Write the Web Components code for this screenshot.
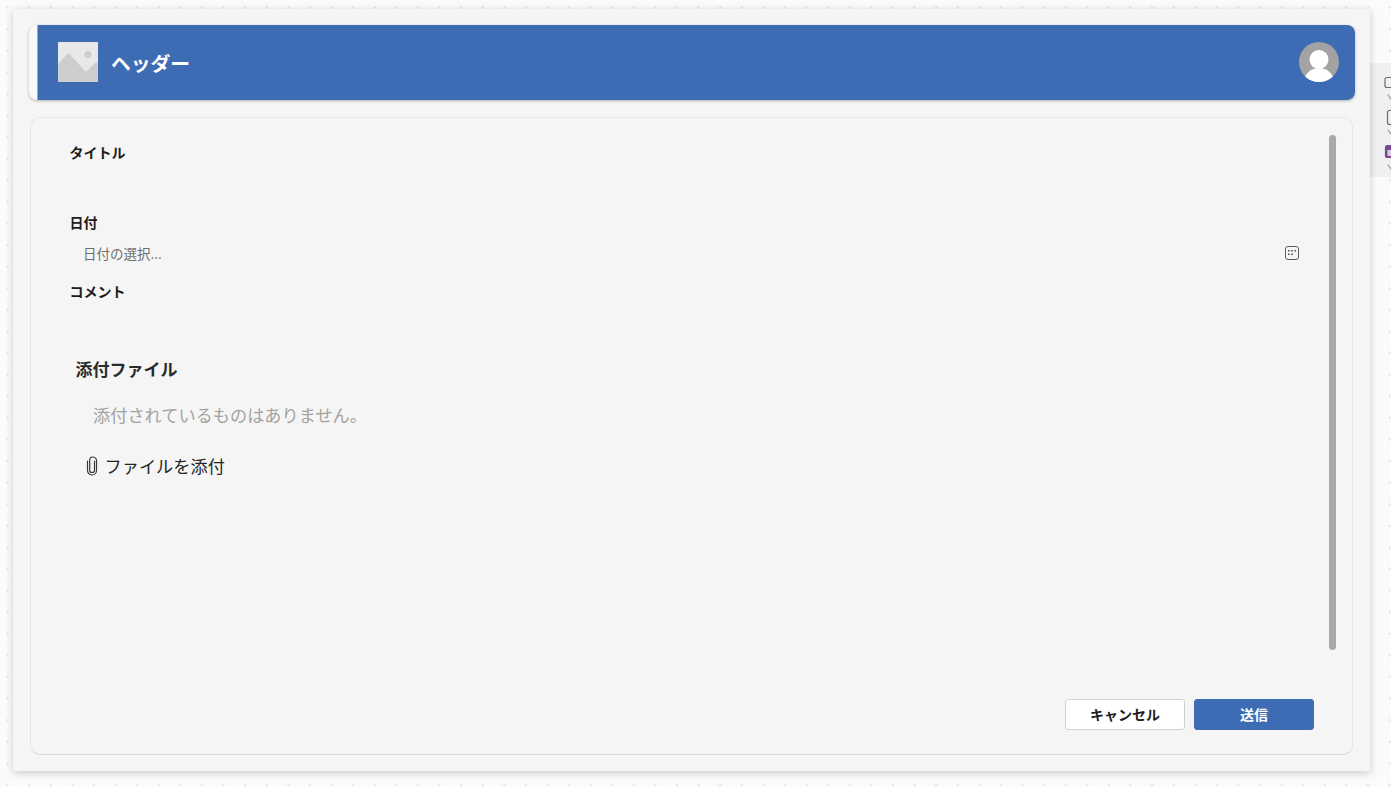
<!DOCTYPE html>
<html lang="ja">
<head>
<meta charset="utf-8">
<title>フォーム</title>
<style>
html, body { margin: 0; height: 787px; overflow: hidden; }
body {
  display: flex;
  align-items: flex-start;
  padding: 9px 0 0 13px;
  box-sizing: border-box;
  background-color: #fbfbfb;
  background-image: radial-gradient(circle at 7.5px 7.5px, #e0e0e0 0, #e0e0e0 .8px, transparent 1.3px);
  background-size: 21.6px 21.6px;
  font-family: "Noto Sans CJK JP", "Noto Sans", sans-serif;
  color: #1f1f1f;
}
</style>
</head>
<body>
<app-frame>
  <app-header slot="header" title-text="ヘッダー"></app-header>
  <form-card slot="card">
    <form-field label="タイトル" height="70"></form-field>
    <form-field label="日付" height="69">
      <date-picker placeholder="日付の選択..."></date-picker>
    </form-field>
    <form-field label="コメント" height="62"></form-field>
    <attachment-box heading="添付ファイル" empty-text="添付されているものはありません。" add-text="ファイルを添付"></attachment-box>
    <app-button slot="actions">キャンセル</app-button>
    <app-button slot="actions" primary>送信</app-button>
  </form-card>
</app-frame>
<side-strip></side-strip>

<script>
// frame that holds the header and the card
class AppFrame extends HTMLElement {
  constructor() {
    super();
    this.attachShadow({ mode: "open" });
    this.shadowRoot.innerHTML = `
<style>
:host {
  display: flex;
  flex-direction: column;
  flex: none;
  z-index: 1;
  box-sizing: border-box;
  width: 1357px;
  height: 762px;
  padding: 16px 15px 16px 16px;
  background: #f5f5f5;
  box-shadow: 0 2px 8px rgba(0,0,0,.2);
}
</style>
<slot name="header"></slot>
<slot name="card"></slot>
<slot></slot>`;
  }
}

class AppHeader extends HTMLElement {
  constructor() {
    super();
    this.attachShadow({ mode: "open" });
    this.shadowRoot.innerHTML = `
<style>
:host {
  display: block;
  height: 75px;
  border-radius: 8px;
  background: #f8f8f8;
  box-shadow: 0 1px 3px rgba(0,0,0,.28);
  overflow: hidden;
}
.bar {
  display: flex;
  align-items: center;
  box-sizing: border-box;
  height: 100%;
  margin-left: 8px;
  padding: 0 16px 1px 20px;
  background: #3d6cb5;
  color: #fff;
  border-left: 1px solid #8ea9d6;
}
h1 { margin: 1px 0 0 13px; font-size: 19.800px; font-weight: 700; line-height: 28px; }
.avatar { margin-left: auto; }
svg { display: block; flex: none; }
</style>
<div class="bar">
  <svg width="40" height="40" viewBox="0 0 40 40">
    <rect width="40" height="40" fill="#e8e8e8"/>
    <circle cx="30" cy="12.500" r="3.600" fill="#cdcdcb"/>
    <path d="M0 22L10.500 11L28 30L38 20L40 22V40H0Z" fill="#cdcdcb"/>
  </svg>
  <h1></h1>
  <svg class="avatar" width="40" height="40" viewBox="0 0 40 40">
    <defs><clipPath id="c"><circle cx="20" cy="20" r="20"/></clipPath></defs>
    <circle cx="20" cy="20" r="20" fill="#a3a3a3"/>
    <g clip-path="url(#c)" fill="#fff">
      <circle cx="20" cy="17.500" r="9.500"/>
      <ellipse cx="20" cy="38.500" rx="14.500" ry="12.500"/>
    </g>
  </svg>
</div>`;
    this.shadowRoot.querySelector("h1").textContent = this.getAttribute("title-text");
  }
}

// card with scrolling form part, fake scrollbar and footer buttons
class FormCard extends HTMLElement {
  constructor() {
    super();
    this.attachShadow({ mode: "open" });
    this.shadowRoot.innerHTML = `
<style>
:host {
  display: flex;
  flex-direction: column;
  box-sizing: border-box;
  width: 1323px;
  height: 638px;
  margin: 17px 0 0 1px;
  padding: 17px 38px 24px 0;
  background: #f5f5f5;
  border: 1px solid #e6e6e6;
  border-bottom-color: #d6d6d6;
  border-radius: 10px;
}
.main { display: flex; height: 515px; }
.fields { flex: 1; padding-left: 38.500px; padding-right: 29px; min-width: 0; }
.thumb { flex: none; width: 7px; margin-right: -22px; border-radius: 4px; background: #a8a8a8; }
.actions { display: flex; justify-content: flex-end; gap: 9px; margin-top: auto; }
</style>
<div class="main">
  <div class="fields"><slot></slot></div>
  <div class="thumb"></div>
</div>
<div class="actions"><slot name="actions"></slot></div>`;
  }
}

class FormField extends HTMLElement {
  constructor() {
    super();
    this.attachShadow({ mode: "open" });
    this.shadowRoot.innerHTML = `
<style>
:host { display: block; }
.label { height: 36px; font-size: 14px; font-weight: 700; line-height: 34px; color: #1c1c1c; }
</style>
<div class="label"></div>
<slot></slot>`;
    this.shadowRoot.querySelector(".label").textContent = this.getAttribute("label");
    this.style.height = this.getAttribute("height") + "px";
  }
}

class DatePicker extends HTMLElement {
  constructor() {
    super();
    this.attachShadow({ mode: "open" });
    this.shadowRoot.innerHTML = `
<style>
:host {
  display: flex;
  align-items: center;
  justify-content: space-between;
  box-sizing: border-box;
  height: 26px;
  padding: 0 0 2px 13.500px;
  font-size: 13.500px;
  color: #6f6f6f;
}
svg { display: block; }
</style>
<span></span>
<svg width="16" height="16" viewBox="0 0 16 16" fill="none">
  <rect x="1.500" y="1.500" width="13" height="13" rx="2.500" stroke="#5c5c5c" stroke-width="1"/>
  <g fill="#444">
    <rect x="4" y="5" width="1.500" height="1.500"/><rect x="7.200" y="5" width="1.500" height="1.500"/><rect x="10.400" y="5" width="1.500" height="1.500"/>
    <rect x="4" y="8.500" width="1.500" height="1.500"/><rect x="7.200" y="8.500" width="1.500" height="1.500"/>
  </g>
</svg>`;
    this.shadowRoot.querySelector("span").textContent = this.getAttribute("placeholder");
  }
}

class AttachmentBox extends HTMLElement {
  constructor() {
    super();
    this.attachShadow({ mode: "open" });
    this.shadowRoot.innerHTML = `
<style>
:host { display: block; padding: 20px 0 0 6px; }
h2 { margin: 0; font-size: 17px; font-weight: 700; line-height: 26px; color: #2b2b2b; }
.empty { margin: 21px 0 0 17.500px; font-size: 17.200px; line-height: 24px; color: #a3a3a0; }
.add { display: flex; align-items: center; margin: 26px 0 0 9.500px; font-size: 17.200px; line-height: 26px; color: #252525; }
svg { display: block; flex: none; margin-right: 5.500px; }
</style>
<h2></h2>
<div class="empty"></div>
<div class="add">
  <svg width="14" height="20" viewBox="0 0 14 20" fill="none" stroke="#3a3a3a" stroke-width="1.200" stroke-linecap="round">
    <path d="M9.500 5V14.500C9.500 15.800 8.400 16.500 7 16.500C5.600 16.500 4.700 15.600 4.700 14.500V4C4.700 2.300 5.800 1 7.300 1C9.600 1 11.500 2.500 11.500 4.500V14.500C11.500 17 9.600 19 7 19C4.400 19 2.500 17 2.500 14.500V5"/>
  </svg>
  <span></span>
</div>`;
    const root = this.shadowRoot;
    root.querySelector("h2").textContent = this.getAttribute("heading");
    root.querySelector(".empty").textContent = this.getAttribute("empty-text");
    root.querySelector(".add span").textContent = this.getAttribute("add-text");
  }
}

class AppButton extends HTMLElement {
  constructor() {
    super();
    this.attachShadow({ mode: "open" });
    this.shadowRoot.innerHTML = `
<style>
:host {
  display: flex;
  align-items: center;
  justify-content: center;
  box-sizing: border-box;
  width: 120px;
  height: 31px;
  padding-bottom: 2px;
  border: 1px solid #d1d1d1;
  border-radius: 3px;
  background: #fff;
  color: #1c1c1c;
  font-size: 14px;
  font-weight: 700;
}
:host([primary]) { background: #3d6cb5; border-color: #3d6cb5; color: #fff; }
</style>
<slot></slot>`;
  }
}

// strip of clipped app icons at the right edge of the window
class SideStrip extends HTMLElement {
  constructor() {
    super();
    this.attachShadow({ mode: "open" });
    this.shadowRoot.innerHTML = `
<style>
:host {
  display: block;
  flex: none;
  box-sizing: border-box;
  width: 21px;
  height: 114px;
  margin: 54px 0 0 0;
  background: #f0f0f0;
  overflow: hidden;
}
svg { display: block; }
</style>
<svg width="21" height="114" viewBox="-1 0 21 114" fill="none" stroke-width="1.200" stroke-linecap="round">
  <rect x="14" y="14.500" width="12" height="10" rx="2" stroke="#6b6b6b"/>
  <path d="M17 32L20 36L24 32" stroke="#9a9a9a"/>
  <rect x="16.500" y="47.500" width="10" height="14" rx="2" stroke="#6b6b6b"/>
  <path d="M17 67L20 71L24 67" stroke="#9a9a9a"/>
  <rect x="14.500" y="82.500" width="12" height="12" rx="2" fill="#7a4a8e" stroke="#7a4a8e"/>
  <rect x="16.500" y="87" width="8" height="6" fill="#d9cde3" stroke="none"/>
  <path d="M17 102L20 106L24 102" stroke="#9a9a9a"/>
</svg>`;
  }
}

customElements.define("app-frame", AppFrame);
customElements.define("app-header", AppHeader);
customElements.define("form-card", FormCard);
customElements.define("form-field", FormField);
customElements.define("date-picker", DatePicker);
customElements.define("attachment-box", AttachmentBox);
customElements.define("app-button", AppButton);
customElements.define("side-strip", SideStrip);
</script>
</body>
</html>
